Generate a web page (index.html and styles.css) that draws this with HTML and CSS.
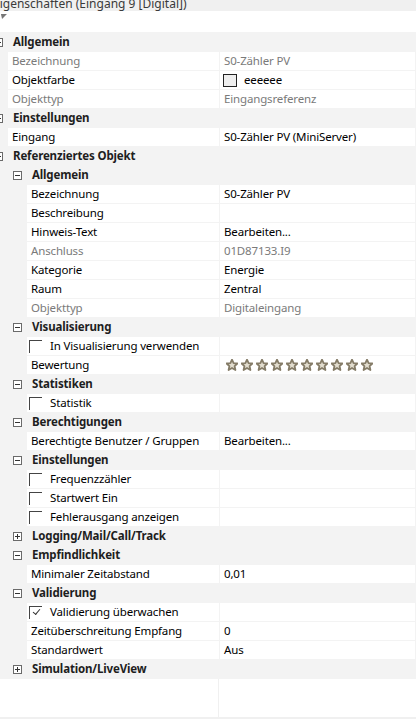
FILE: index.html
```html
<!DOCTYPE html>
<html lang="de">
<head>
<meta charset="utf-8">
<link rel="stylesheet" href="styles.css">
</head>
<body>
<div class="title"><span class="title-text">Eigenschaften (Eingang 9 [Digital])</span></div>
<div class="toolbar"><span class="tri"></span></div>
<div class="grid">
  <div class="row cat l0"><span class="exp"></span><span class="cat-label">Allgemein</span></div>
  <div class="row prop l1"><div class="name dis">Bezeichnung</div><div class="val dis">S0-Zähler PV</div></div>
  <div class="row prop l1"><div class="name">Objektfarbe</div><div class="val"><span class="swatch"></span>eeeeee</div></div>
  <div class="row prop l1"><div class="name dis">Objekttyp</div><div class="val dis">Eingangsreferenz</div></div>
  <div class="row cat l0"><span class="exp"></span><span class="cat-label">Einstellungen</span></div>
  <div class="row prop l1"><div class="name">Eingang</div><div class="val">S0-Zähler PV (MiniServer)</div></div>
  <div class="row cat l0"><span class="exp"></span><span class="cat-label">Referenziertes Objekt</span></div>
  <div class="row cat l1"><span class="exp"></span><span class="cat-label">Allgemein</span></div>
  <div class="row prop l2"><div class="name">Bezeichnung</div><div class="val">S0-Zähler PV</div></div>
  <div class="row prop l2"><div class="name">Beschreibung</div><div class="val"></div></div>
  <div class="row prop l2"><div class="name">Hinweis-Text</div><div class="val">Bearbeiten...</div></div>
  <div class="row prop l2"><div class="name dis">Anschluss</div><div class="val dis">01D87133.I9</div></div>
  <div class="row prop l2"><div class="name">Kategorie</div><div class="val">Energie</div></div>
  <div class="row prop l2"><div class="name">Raum</div><div class="val">Zentral</div></div>
  <div class="row prop l2"><div class="name dis">Objekttyp</div><div class="val dis">Digitaleingang</div></div>
  <div class="row cat l1"><span class="exp"></span><span class="cat-label">Visualisierung</span></div>
  <div class="row prop l2"><div class="name"><span class="cb"></span>In Visualisierung verwenden</div><div class="val"></div></div>
  <div class="row prop l2"><div class="name">Bewertung</div><div class="val stars">
    <svg class="star" viewBox="0 0 12 12"><path d="M6 0.6 L7.6 4.1 L11.4 4.5 L8.6 7.1 L9.4 11 L6 9 L2.6 11 L3.4 7.1 L0.6 4.5 L4.4 4.1 Z"/></svg>
    <svg class="star" viewBox="0 0 12 12"><path d="M6 0.6 L7.6 4.1 L11.4 4.5 L8.6 7.1 L9.4 11 L6 9 L2.6 11 L3.4 7.1 L0.6 4.5 L4.4 4.1 Z"/></svg>
    <svg class="star" viewBox="0 0 12 12"><path d="M6 0.6 L7.6 4.1 L11.4 4.5 L8.6 7.1 L9.4 11 L6 9 L2.6 11 L3.4 7.1 L0.6 4.5 L4.4 4.1 Z"/></svg>
    <svg class="star" viewBox="0 0 12 12"><path d="M6 0.6 L7.6 4.1 L11.4 4.5 L8.6 7.1 L9.4 11 L6 9 L2.6 11 L3.4 7.1 L0.6 4.5 L4.4 4.1 Z"/></svg>
    <svg class="star" viewBox="0 0 12 12"><path d="M6 0.6 L7.6 4.1 L11.4 4.5 L8.6 7.1 L9.4 11 L6 9 L2.6 11 L3.4 7.1 L0.6 4.5 L4.4 4.1 Z"/></svg>
    <svg class="star" viewBox="0 0 12 12"><path d="M6 0.6 L7.6 4.1 L11.4 4.5 L8.6 7.1 L9.4 11 L6 9 L2.6 11 L3.4 7.1 L0.6 4.5 L4.4 4.1 Z"/></svg>
    <svg class="star" viewBox="0 0 12 12"><path d="M6 0.6 L7.6 4.1 L11.4 4.5 L8.6 7.1 L9.4 11 L6 9 L2.6 11 L3.4 7.1 L0.6 4.5 L4.4 4.1 Z"/></svg>
    <svg class="star" viewBox="0 0 12 12"><path d="M6 0.6 L7.6 4.1 L11.4 4.5 L8.6 7.1 L9.4 11 L6 9 L2.6 11 L3.4 7.1 L0.6 4.5 L4.4 4.1 Z"/></svg>
    <svg class="star" viewBox="0 0 12 12"><path d="M6 0.6 L7.6 4.1 L11.4 4.5 L8.6 7.1 L9.4 11 L6 9 L2.6 11 L3.4 7.1 L0.6 4.5 L4.4 4.1 Z"/></svg>
    <svg class="star" viewBox="0 0 12 12"><path d="M6 0.6 L7.6 4.1 L11.4 4.5 L8.6 7.1 L9.4 11 L6 9 L2.6 11 L3.4 7.1 L0.6 4.5 L4.4 4.1 Z"/></svg>
  </div></div>
  <div class="row cat l1"><span class="exp"></span><span class="cat-label">Statistiken</span></div>
  <div class="row prop l2"><div class="name"><span class="cb"></span>Statistik</div><div class="val"></div></div>
  <div class="row cat l1"><span class="exp"></span><span class="cat-label">Berechtigungen</span></div>
  <div class="row prop l2"><div class="name">Berechtigte Benutzer / Gruppen</div><div class="val">Bearbeiten...</div></div>
  <div class="row cat l1"><span class="exp"></span><span class="cat-label">Einstellungen</span></div>
  <div class="row prop l2"><div class="name"><span class="cb"></span>Frequenzzähler</div><div class="val"></div></div>
  <div class="row prop l2"><div class="name"><span class="cb"></span>Startwert Ein</div><div class="val"></div></div>
  <div class="row prop l2"><div class="name"><span class="cb"></span>Fehlerausgang anzeigen</div><div class="val"></div></div>
  <div class="row cat l1"><span class="exp plus"></span><span class="cat-label">Logging/Mail/Call/Track</span></div>
  <div class="row cat l1"><span class="exp"></span><span class="cat-label">Empfindlichkeit</span></div>
  <div class="row prop l2"><div class="name">Minimaler Zeitabstand</div><div class="val">0,01</div></div>
  <div class="row cat l1"><span class="exp"></span><span class="cat-label">Validierung</span></div>
  <div class="row prop l2"><div class="name"><span class="cb checked"></span>Validierung überwachen</div><div class="val"></div></div>
  <div class="row prop l2"><div class="name">Zeitüberschreitung Empfang</div><div class="val">0</div></div>
  <div class="row prop l2"><div class="name">Standardwert</div><div class="val">Aus</div></div>
  <div class="row cat l1"><span class="exp plus"></span><span class="cat-label">Simulation/LiveView</span></div>
  <div class="filler"><div class="filler-left"></div></div>
</div>
</body>
</html>
```
FILE: styles.css
```css
* { box-sizing: border-box; }
html, body { margin: 0; padding: 0; }
body {
  width: 416px;
  height: 720px;
  overflow: hidden;
  background: #ffffff;
  font-family: "Noto Sans", "Open Sans", sans-serif;
  font-size: 11.5px;
  letter-spacing: -0.15px;
  color: #000;
}
.title {
  height: 11px;
  background: #f0f0f0;
  overflow: hidden;
}
.title-text {
  display: block;
  margin-left: -7px;
  margin-top: -4px;
  line-height: 16px;
  font-size: 12px;
  letter-spacing: 0;
  color: #3a3a3a;
  white-space: nowrap;
}
.toolbar {
  height: 21px;
  background: #fff;
  padding: 3px 0 0 0;
}
.tri {
  display: block;
  width: 0; height: 0;
  border-left: 3px solid transparent;
  border-right: 3px solid transparent;
  border-top: 5px solid #777;
  transform: skewX(-20deg);
}
.grid {
  background: #f3f3f3;
  padding-top: 1px;
}
.row {
  height: 19px;
  display: flex;
  align-items: stretch;
  padding-bottom: 1px;
  padding-right: 1px;
}
.row.cat { align-items: center; }
.row.cat.l0 { padding-left: 0; }
.row.cat.l1 { padding-left: 13px; }
.row.cat.l0 .exp { margin-left: -6px; }
.exp {
  width: 9px;
  height: 9px;
  border: 1px solid #6a6a6a;
  position: relative;
  flex: none;
  background: #fff;
}
.exp::before {
  content: "";
  position: absolute;
  left: 1px; top: 3px;
  width: 5px; height: 1px;
  background: #333;
}
.exp.plus::after {
  content: "";
  position: absolute;
  left: 3px; top: 1px;
  width: 1px; height: 5px;
  background: #333;
}
.cat-label {
  margin-left: 10px;
  font-weight: 700;
  color: #1e1e1e;
  line-height: 18px;
}
.row.prop.l1 { padding-left: 8px; }
.row.prop.l2 { padding-left: 27px; }
.name {
  flex: 1;
  background: #fff;
  padding-left: 4px;
  line-height: 18px;
  white-space: nowrap;
  overflow: hidden;
  display: flex;
  align-items: center;
}
.val {
  width: 195px;
  margin-left: 1px;
  background: #fff;
  padding-left: 4px;
  line-height: 18px;
  white-space: nowrap;
  display: flex;
  align-items: center;
}
.dis { color: #7a7a7a; }
.swatch {
  width: 14px; height: 13px;
  border: 1px solid #222;
  background: #eeeeee;
  margin-left: -1px;
  margin-right: 7px;
}
.cb {
  width: 13px; height: 13px;
  border-top: 1px solid #444;
  border-left: 1px solid #444;
  margin-left: -2px;
  margin-right: 8px;
  position: relative;
  flex: none;
}
.cb.checked::after {
  content: "";
  position: absolute;
  left: 3px; top: 2px;
  width: 6px; height: 3px;
  border-left: 1px solid #333;
  border-bottom: 1px solid #333;
  transform: rotate(-50deg);
}
.stars { gap: 3px; padding-left: 6px; }
.star {
  width: 12px; height: 12px;
  flex: none;
}
.star path {
  fill: #e2ddcf;
  stroke: #857c68;
  stroke-width: 1.8;
  stroke-linejoin: round;
}
.filler {
  height: 40px;
  background: #fff;
  display: flex;
  border-bottom: 2px solid #f0f0f0;
}
.filler-left {
  width: 219px;
  border-right: 1px solid #f0f0f0;
}
```
